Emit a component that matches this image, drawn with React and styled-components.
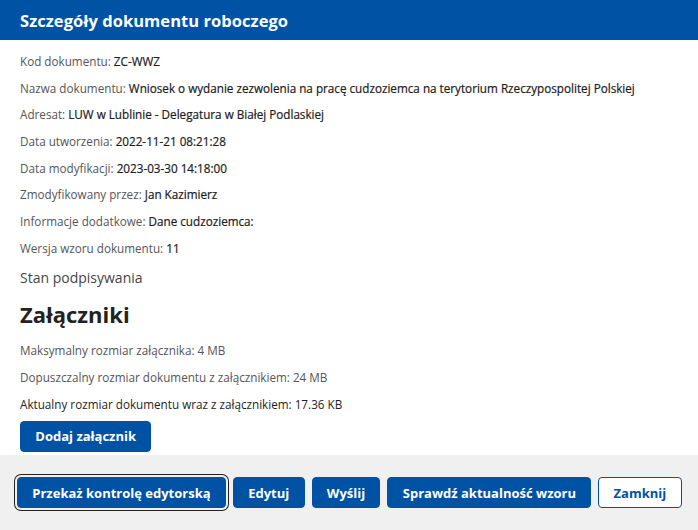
import React from "react";
import styled, { createGlobalStyle } from "styled-components";

const Global = createGlobalStyle`
  html, body { margin: 0; padding: 0; background: #fff; }
  body { font-family: "Open Sans", "Noto Sans", sans-serif; }
`;

const Dialog = styled.div`
  width: 698px;
  height: 530px;
  display: flex;
  flex-direction: column;
  background: #fff;
  overflow: hidden;
`;

const Header = styled.div`
  height: 40px;
  background: #0052a5;
  color: #fff;
  display: flex;
  align-items: center;
  padding: 0 20px;
  flex-shrink: 0;
`;

const Title = styled.h1`
  margin: 0;
  font-size: 16.5px;
  font-weight: 700;
  letter-spacing: 0.05px;
`;

const Body = styled.div`
  flex: 1;
  padding: 8px 20px 0;
  display: flex;
  flex-direction: column;
`;

const Row = styled.div`
  font-size: 11.7px;
  line-height: 17px;
  padding: 4.85px 0;
  white-space: nowrap;
  color: ${p => (p.$dark ? "#1e1e1e" : "#555")};
`;

const Value = styled.span`
  color: #1b1b1b;
  font-weight: 400;
  -webkit-text-stroke: 0.2px #1b1b1b;
`;

const Section = styled.div`
  font-size: 14px;
  color: #444;
  margin-top: 6px;
  line-height: 20px;
`;

const Heading = styled.h2`
  margin: 12px 0 10px;
  font-size: 22px;
  line-height: 28px;
  font-weight: 700;
  color: #222;
`;

const Button = styled.button`
  font-family: inherit;
  font-size: 13px;
  font-weight: 700;
  height: 31px;
  padding: 0 14.3px;
  border-radius: 4px;
  white-space: nowrap;
  cursor: pointer;
  color: ${p => (p.$outline ? "#0052a5" : "#fff")};
  background: ${p => (p.$outline ? "#fff" : "#0052a5")};
  border: 1px solid #0052a5;
  box-shadow: ${p => (p.$focus ? "0 0 0 2px #f0f0f0, 0 0 0 3px #222" : "none")};
`;

const AddRow = styled.div`
  margin-top: 3px;
  display: flex;
`;

const Footer = styled.div`
  height: 75px;
  background: #f0f0f0;
  display: flex;
  align-items: center;
  gap: 7px;
  padding: 0 17px;
  flex-shrink: 0;
`;

const info = [
  ["Kod dokumentu: ", "ZC-WWZ"],
  ["Nazwa dokumentu: ", "Wniosek o wydanie zezwolenia na pracę cudzoziemca na terytorium Rzeczypospolitej Polskiej"],
  ["Adresat: ", "LUW w Lublinie - Delegatura w Białej Podlaskiej"],
  ["Data utworzenia: ", "2022-11-21 08:21:28"],
  ["Data modyfikacji: ", "2023-03-30 14:18:00"],
  ["Zmodyfikowany przez: ", "Jan Kazimierz"],
  ["Informacje dodatkowe: ", "Dane cudzoziemca:"],
  ["Wersja wzoru dokumentu: ", "11"],
];

export default function App() {
  return (
    <Dialog>
      <Global />
      <Header>
        <Title>Szczegóły dokumentu roboczego</Title>
      </Header>
      <Body>
        {info.map(([label, value]) => (
          <Row key={label}>
            {label}
            <Value>{value}</Value>
          </Row>
        ))}
        <Section>Stan podpisywania</Section>
        <Heading>Załączniki</Heading>
        <Row>Maksymalny rozmiar załącznika: 4 MB</Row>
        <Row>Dopuszczalny rozmiar dokumentu z załącznikiem: 24 MB</Row>
        <Row $dark>Aktualny rozmiar dokumentu wraz z załącznikiem: 17.36 KB</Row>
        <AddRow>
          <Button>Dodaj załącznik</Button>
        </AddRow>
      </Body>
      <Footer>
        <Button $focus>Przekaż kontrolę edytorską</Button>
        <Button>Edytuj</Button>
        <Button>Wyślij</Button>
        <Button>Sprawdź aktualność wzoru</Button>
        <Button $outline>Zamknij</Button>
      </Footer>
    </Dialog>
  );
}
